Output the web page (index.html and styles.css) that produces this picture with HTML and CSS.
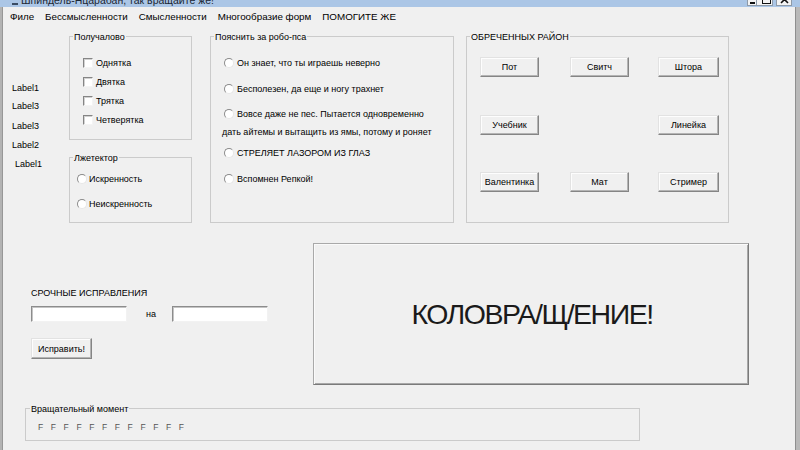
FILE: index.html
```html
<!DOCTYPE html>
<html lang="ru">
<head>
<meta charset="utf-8">
<title>Шпиндель-Нцарабан, так вращайте же!</title>
<link rel="stylesheet" href="styles.css">
</head>
<body>
<div class="window">
  <div class="titlebar">
    <span class="app-icon"></span>
    <span class="title-text">Шпиндель-Нцарабан, так вращайте же!</span>
    <div class="caption-buttons">
      <span class="cap-btn cap-min"><svg width="10" height="14" viewBox="0 0 10 14"><rect x="2" y="9" width="5" height="2" fill="#111"/></svg></span>
      <span class="cap-btn cap-max"><svg width="15" height="14" viewBox="0 0 15 14"><rect x="5.5" y="3.5" width="8" height="7" fill="none" stroke="#111" stroke-width="1"/><rect x="5" y="3" width="9" height="2" fill="#111"/></svg></span>
      <span class="cap-btn cap-close"><svg width="16" height="14" viewBox="0 0 16 14"><path d="M4 3 L11 10 M11 3 L4 10" stroke="#111" stroke-width="1.6"/></svg></span>
    </div>
  </div>
  <div class="frame">
    <div class="edge-left"></div>
    <div class="client">
      <nav class="menubar">
        <span class="menu-item">Филе</span>
        <span class="menu-item">Бессмысленности</span>
        <span class="menu-item">Смысленности</span>
        <span class="menu-item">Многообразие форм</span>
        <span class="menu-item">ПОМОГИТЕ ЖЕ</span>
      </nav>

      <div class="top-row">
        <div class="labels">
          <span class="lbl lbl-a">Label1</span>
          <span class="lbl lbl-b">Label3</span>
          <span class="lbl lbl-c">Label3</span>
          <span class="lbl lbl-d">Label2</span>
          <span class="lbl lbl-e">Label1</span>
        </div>

        <div class="left-groups">
          <div class="group group-poluch">
            <div class="group-title">Получалово</div>
            <div class="checks">
              <div class="check"><span class="box"></span>Однятка</div>
              <div class="check"><span class="box"></span>Двятка</div>
              <div class="check"><span class="box"></span>Трятка</div>
              <div class="check"><span class="box"></span>Четверятка</div>
            </div>
          </div>
          <div class="group group-lie">
            <div class="group-title">Лжетектор</div>
            <div class="lie-radios">
              <div class="radio-row"><span class="radio"></span>Искренность</div>
              <div class="radio-row"><span class="radio"></span>Неискренность</div>
            </div>
          </div>
        </div>

        <div class="group group-robo">
          <div class="group-title">Пояснить за робо-пса</div>
          <div class="robo-list">
            <div class="robo-row r1"><span class="radio"></span>Он знает, что ты играешь неверно</div>
            <div class="robo-row r2"><span class="radio"></span>Бесполезен, да еще и ногу трахнет</div>
            <div class="robo-row r3"><span class="radio"></span>Вовсе даже не пес. Пытается одновременно</div>
            <div class="robo-row r3b">дать айтемы и вытащить из ямы, потому и роняет</div>
            <div class="robo-row r4"><span class="radio"></span>СТРЕЛЯЕТ ЛАЗОРОМ ИЗ ГЛАЗ</div>
            <div class="robo-row r5"><span class="radio"></span>Вспомнен Репкой!</div>
          </div>
        </div>

        <div class="group group-doom">
          <div class="group-title">ОБРЕЧЕННЫХ РАЙОН</div>
          <div class="btn-grid">
            <span class="btn">Пот</span>
            <span class="btn">Свитч</span>
            <span class="btn btn-wide">Штора</span>
            <span class="btn">Учебник</span>
            <span class="empty"></span>
            <span class="btn btn-wide">Линейка</span>
            <span class="btn">Валентинка</span>
            <span class="btn">Мат</span>
            <span class="btn btn-wide">Стример</span>
          </div>
        </div>
      </div>

      <div class="mid-row">
        <div class="fix-col">
          <div class="fix-title">СРОЧНЫЕ ИСПРАВЛЕНИЯ</div>
          <div class="fix-inputs">
            <span class="textbox"></span>
            <span class="na">на</span>
            <span class="textbox"></span>
          </div>
          <span class="btn btn-fix">Исправить!</span>
        </div>
        <div class="big-panel">
          <span class="big-text">КОЛОВРА/Щ/ЕНИЕ!</span>
        </div>
      </div>

      <div class="group group-torque">
        <div class="group-title">Вращательный момент</div>
        <div class="f-row">
          <span>F</span><span>F</span><span>F</span><span>F</span><span>F</span><span>F</span>
          <span>F</span><span>F</span><span>F</span><span>F</span><span>F</span><span>F</span>
        </div>
      </div>
    </div>
    <div class="edge-right"></div>
  </div>
</div>
</body>
</html>
```
FILE: styles.css
```css
* { box-sizing: border-box; }
html, body { margin: 0; padding: 0; }
body {
  background: #f0f0f0;
  font-family: "Liberation Sans", Arial, sans-serif;
  font-size: 9px;
  color: #000;
}
.window {
  width: 800px;
  height: 450px;
  overflow: hidden;
  display: flex;
  flex-direction: column;
  background: #f0f0f0;
}

/* title bar (mostly cut off) */
.titlebar {
  height: 7px;
  flex: none;
  background: #abc6e6;
  display: flex;
  align-items: flex-start;
  overflow: hidden;
}
.app-icon {
  width: 6px;
  height: 2px;
  margin: 3px 0 0 12px;
  background: #3b4c63;
}
.title-text {
  margin: -6.5px 0 0 3px;
  font-size: 10.5px;
  line-height: 12px;
  color: #1c2633;
  white-space: nowrap;
}
.caption-buttons {
  margin-left: auto;
  margin-right: 8px;
  display: flex;
}
.cap-btn {
  display: block;
  height: 14px;
  margin-top: -8px;
  background: #f3f3f3;
  border: 1px solid #8e9aa8;
}
.cap-btn svg { display: block; }
.cap-min { width: 10px; }
.cap-max { width: 16px; border-left: none; }
.cap-close { width: 16px; margin-left: 3px; }

/* frame */
.frame {
  flex: 1;
  display: flex;
  min-height: 0;
}
.edge-left {
  width: 3px;
  flex: none;
  background: #b3b3b3;
  border-right: 1px solid #979797;
}
.edge-right {
  width: 5px;
  flex: none;
  background: #b9b9b9;
  border-left: 1px solid #8f8f8f;
}
.client {
  flex: 1;
  display: flex;
  flex-direction: column;
  min-width: 0;
}

/* menu */
.menubar {
  height: 19px;
  flex: none;
  display: flex;
  align-items: center;
  gap: 11px;
  padding-left: 7px;
  font-size: 9.8px;
}
.menu-item { white-space: nowrap; }

/* groups */
.group {
  border: 1px solid #cbcbcb;
}
.group-title {
  width: fit-content;
  margin: -6px 0 0 3px;
  padding: 0 1px;
  line-height: 12px;
  background: #f0f0f0;
  white-space: nowrap;
}

/* top row */
.top-row {
  display: flex;
  align-items: flex-start;
  margin-top: 10px;
  flex: none;
}
.labels {
  width: 57px;
  margin-left: 9px;
  display: flex;
  flex-direction: column;
  flex: none;
}
.lbl { display: block; line-height: 12px; }
.lbl-a { margin-top: 46px; }
.lbl-b { margin-top: 6px; }
.lbl-c { margin-top: 8px; }
.lbl-d { margin-top: 7px; }
.lbl-e { margin-top: 7px; margin-left: 3px; }

.left-groups {
  width: 123px;
  flex: none;
  display: flex;
  flex-direction: column;
}
.group-poluch { height: 104px; }
.group-lie { height: 66px; margin-top: 17px; }

.checks { margin-top: 10px; }
.check {
  height: 19px;
  display: flex;
  align-items: center;
  padding-left: 13px;
}
.box {
  width: 10px;
  height: 10px;
  margin-right: 3px;
  background: #fff;
  border: 1px solid;
  border-color: #858585 #f4f4f4 #f4f4f4 #858585;
  box-shadow: inset 1px 1px 0 #d2d2d2;
  flex: none;
}
.radio {
  width: 10px;
  height: 10px;
  border-radius: 50%;
  background: #fff;
  border: 1px solid;
  border-color: #8a8a8a #e6e6e6 #e6e6e6 #8a8a8a;
  flex: none;
}

.lie-radios { margin-top: 2.5px; }
.radio-row {
  height: 25px;
  display: flex;
  align-items: center;
  padding-left: 7px;
}
.radio-row .radio { margin-right: 2px; }

.group-robo {
  width: 244px;
  height: 187px;
  margin-left: 18px;
  flex: none;
}
.robo-list { padding-left: 13px; }
.robo-row {
  height: 14px;
  display: flex;
  align-items: center;
  white-space: nowrap;
}
.robo-row .radio { margin-right: 3px; }
.r1 { margin-top: 13px; }
.r2 { margin-top: 12px; }
.r3 { margin-top: 11px; }
.r3b { margin-top: 4px; margin-left: -2px; }
.r4 { margin-top: 7px; }
.r5 { margin-top: 12px; }

.group-doom {
  width: 263px;
  height: 187px;
  margin-left: 12px;
  flex: none;
}
.btn-grid {
  display: grid;
  grid-template-columns: 90px 88px 61px;
  grid-template-rows: 20px 20px 20px;
  row-gap: 37.5px;
  margin-top: 14px;
  padding-left: 13px;
}

/* buttons */
.btn {
  width: 59px;
  height: 20px;
  display: flex;
  align-items: center;
  justify-content: center;
  background: #f0f0f0;
  border: 1px solid;
  border-color: #e2e2e2 #858585 #858585 #e2e2e2;
  box-shadow: inset -1px -1px 0 #b4b4b4, inset 1px 1px 0 #fdfdfd;
  white-space: nowrap;
}
.btn-wide { width: 61px; }

/* middle row */
.mid-row {
  display: flex;
  align-items: flex-start;
  margin-top: 20px;
  flex: none;
}
.fix-col {
  width: 310px;
  flex: none;
  padding-left: 28px;
  display: flex;
  flex-direction: column;
  align-items: flex-start;
}
.fix-title {
  margin-top: 44px;
  line-height: 13px;
  white-space: nowrap;
}
.fix-inputs {
  margin-top: 6px;
  display: flex;
  align-items: center;
  height: 16px;
}
.textbox {
  width: 96px;
  height: 16px;
  background: #fff;
  border: 1px solid;
  border-color: #8c8c8c #f2f2f2 #f2f2f2 #8c8c8c;
  box-shadow: inset 1px 1px 0 #c4c4c4;
}
.na { margin: 0 16px 0 19px; }
.btn-fix {
  width: 61px;
  height: 21px;
  margin-top: 16px;
}

.big-panel {
  width: 436px;
  height: 142px;
  flex: none;
  display: flex;
  align-items: center;
  justify-content: center;
  border: 1px solid;
  border-color: #a9a9a9 #7a7a7a #7a7a7a #a9a9a9;
  box-shadow: inset 1px 1px 0 #fafafa, inset -1px -1px 0 #a8a8a8;
}
.big-text {
  font-size: 28.5px;
  letter-spacing: -1.5px;
  line-height: 32px;
  color: #1a1a1a;
  white-space: nowrap;
  padding-left: 2px;
}

/* bottom group */
.group-torque {
  width: 615px;
  height: 33px;
  margin: 23px 0 0 22px;
  flex: none;
}
.group-torque .group-title { margin-left: 4px; }
.f-row {
  display: flex;
  margin-top: 6px;
  padding-left: 12px;
  line-height: 12px;
  font-size: 8.5px;
  color: #555;
}
.f-row span { width: 12.8px; flex: none; }
```
